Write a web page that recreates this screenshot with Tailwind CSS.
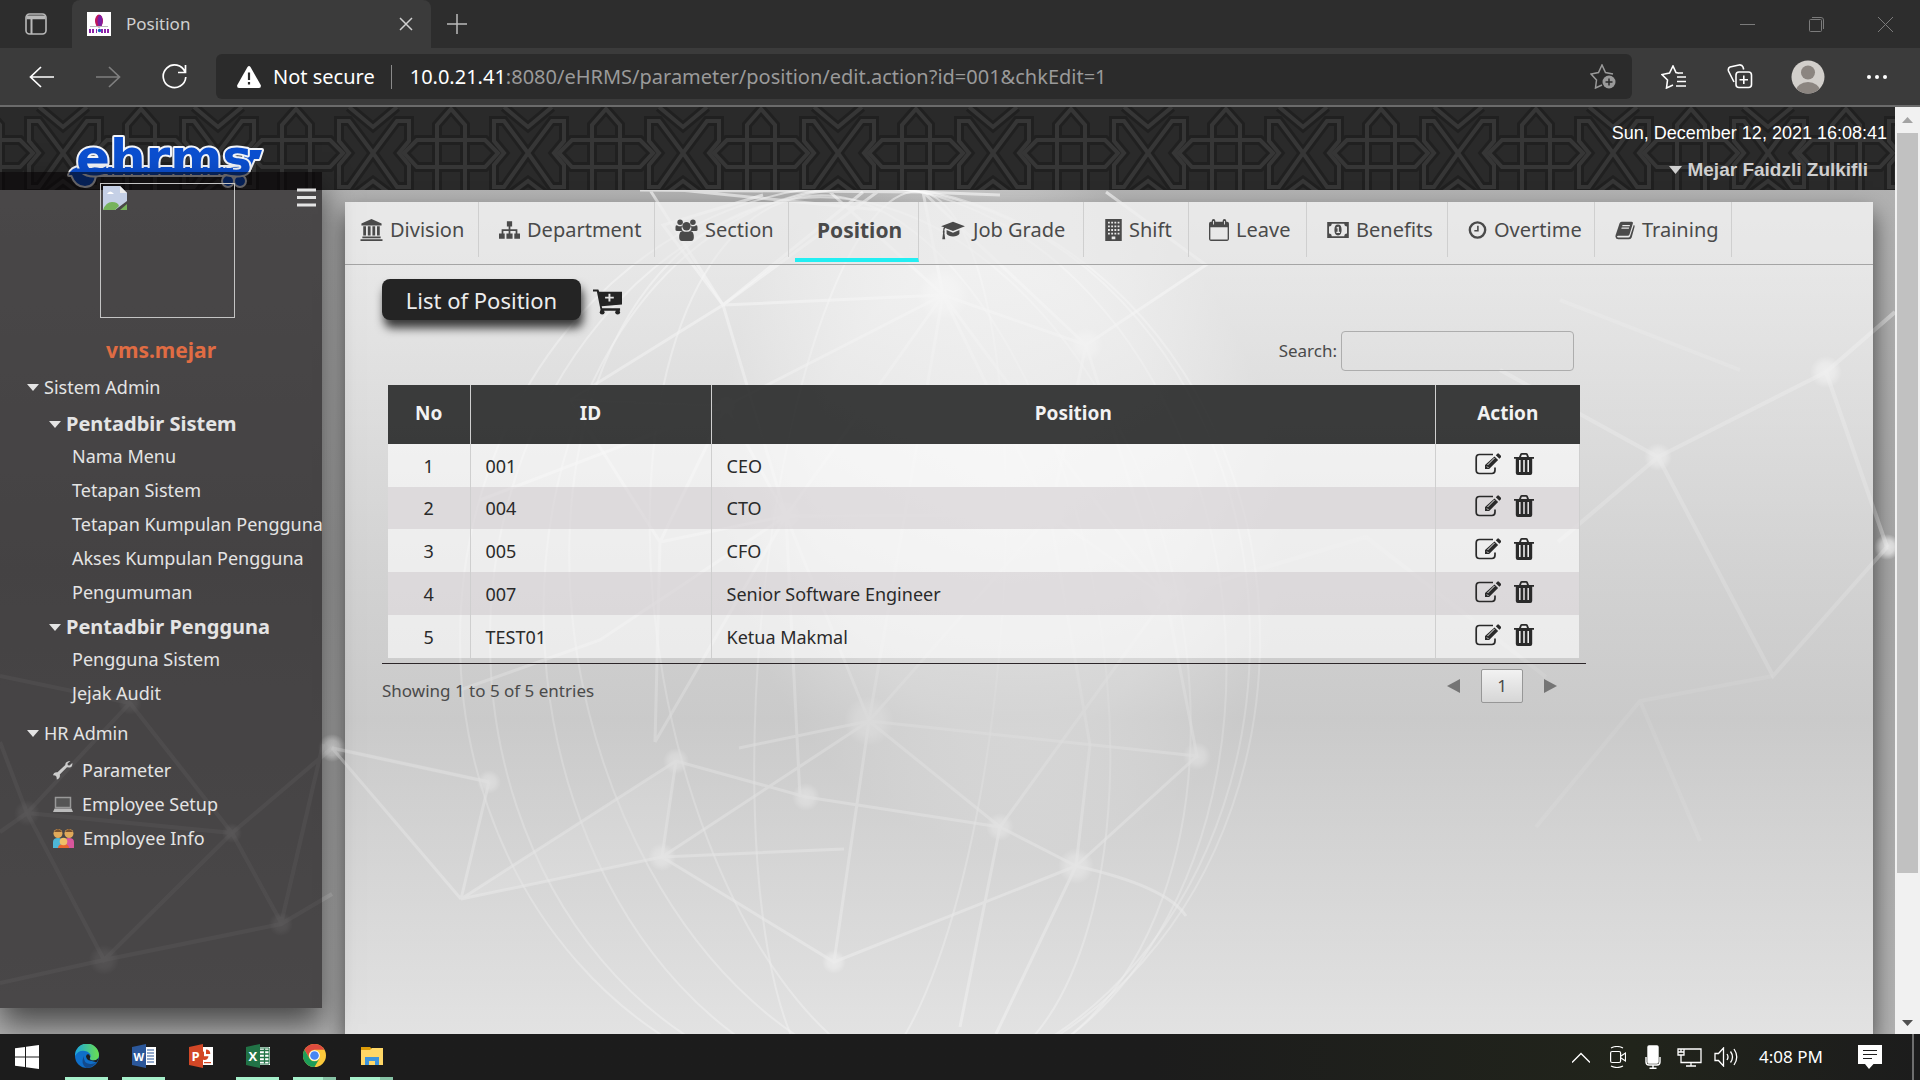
<!DOCTYPE html>
<html lang="en">
<head>
<meta charset="utf-8">
<title>Position</title>
<script src="https://cdn.jsdelivr.net/npm/@tailwindcss/browser@4"></script>
</head>
<body class="h-screen flex flex-col overflow-hidden bg-[#1d1d1d] font-['Noto_Sans',sans-serif]">

<!-- icon symbols -->
<svg class="hidden" aria-hidden="true">
  <symbol id="i-bank" viewBox="0 0 24 24"><path d="M12 0 1 5v2h22V5zM3 8h3v10H3zM8 8h3v10H8zM13 8h3v10h-3zM18 8h3v10h-3zM2 19h20v2H2zM0 22h24v2H0z" fill="currentColor"/></symbol>
  <symbol id="i-tree" viewBox="0 0 24 24"><path d="M9 2h6v6h-2v3h8v5h3v6h-6.500v-6H19v-3h-6v3h2.500v6h-7v-6H11v-3H5v3h1.500v6H0v-6h3v-5h8V8H9z" fill="currentColor"/></symbol>
  <symbol id="i-users" viewBox="0 0 24 24"><g fill="currentColor"><circle cx="5" cy="3.500" r="3"/><circle cx="19" cy="3.500" r="3"/><circle cx="12" cy="8" r="4.600"/><path d="M0 12V9q0-3 2-2 3 2 5 0-1 4 1 6H2q-2 0-2-1zM24 12V9q0-3-2-2-3 2-5 0 1 4-1 6h6q2 0 2-1zM4 20q0-7 4-7 4 2 8 0 4 0 4 7 0 4-3 4H7q-3 0-3-4z"/></g></symbol>
  <symbol id="i-cap" viewBox="0 0 26 24"><path d="m13 3 13 5-13 5-8.500-3.300Q3.500 11 3.600 13q1 1 0 2l.9 7H1.300l.9-7q-1-1 0-2 0-3 1-4L0 8zM20 12v4q-2 3-7 3t-7-3v-4l7 3z" fill="currentColor"/></symbol>
  <symbol id="i-building" viewBox="0 0 18 24"><path fill-rule="evenodd" d="M0 0h18v24H0zM3 3v2h2V3zm3.500 0v2h2V3zm3.500 0v2h2V3zm3.500 0v2h2V3zM3 7v2h2V7zm3.500 0v2h2V7zM10 7v2h2V7zm3.500 0v2h2V7zM3 11v2h2v-2zm3.500 0v2h2v-2zm3.500 0v2h2v-2zm3.500 0v2h2v-2zM3 15v2h2v-2zm3.500 0v2h2v-2zm3.500 0v2h2v-2zm3.500 0v2h2v-2zM7 19v3h4v-3z" fill="currentColor"/></symbol>
  <symbol id="i-cal" viewBox="0 0 22 24"><path fill-rule="evenodd" d="M3 3V2q0-2 2-2t2 2v1h8V2q0-2 2-2t2 2v1h1q2 0 2 2v17q0 2-2 2H2q-2 0-2-2V5q0-2 2-2zM1.500 9v13.500h19V9zM4.500 2v4h1V2zm12 0v4h1V2z" fill="currentColor"/></symbol>
  <symbol id="i-money" viewBox="0 0 24 20"><path fill-rule="evenodd" d="M0 1h24v18H0zM5 3q0 3-3 3v8q3 0 3 3h14q0-3 3-3V6q-3 0-3-3zM12 4q4 0 4 6t-4 6-4-6 4-6zM10.500 7v1.200l1-.2v4h-1.300v1.300h4V12H13V6.500h-1z" fill="currentColor"/></symbol>
  <symbol id="i-clock" viewBox="0 0 24 24"><circle cx="12" cy="12" r="9.700" fill="none" stroke="currentColor" stroke-width="3"/><path d="M12.500 6.500V13H8" fill="none" stroke="currentColor" stroke-width="2"/></symbol>
  <symbol id="i-book" viewBox="0 0 24 24"><path fill-rule="evenodd" d="M8 2h12q2 0 1.500 2l-4 13q-.5 2-2.500 2H4q-2 0-1.500 1T5 21h11q1.500 0 2-1.500L22.500 6q1.500.5 1 2L20 21q-.7 2-3 2H4q-3 0-3.500-3 0-2 1-4L5.500 4Q6 2 8 2zM9 6l-.4 1.500h9L18 6zM8 9l-.4 1.500h9L17 9z" fill="currentColor"/></symbol>
  <symbol id="i-cart" viewBox="0 0 30 26"><path fill-rule="evenodd" d="M0 0h5.500l1 2.500H30v13L9 17.500l.5 2H28V22H8L4 2.200H0zM16 4.500v3h-3.500v2H16v3h2v-3h3.500v-2H18v-3z" fill="currentColor"/><circle cx="9.500" cy="23.500" r="2.500" fill="currentColor"/><circle cx="25.500" cy="23.500" r="2.500" fill="currentColor"/></symbol>
  <symbol id="i-edit" viewBox="0 0 26 22"><path d="M18 1.500H4.500Q1.200 1.500 1.200 5v12q0 3.500 3.300 3.500H17q3 0 3-3.500v-2.500" fill="none" stroke="currentColor" stroke-width="1.700"/><path d="m19.500 3.500 3.600 3.600-9 9H10v-4zM20.800 2.200l1.500-1.500q.8-.8 1.600 0l2 2q.8.800 0 1.600l-1.500 1.500z" fill="currentColor"/><path d="m12 13.500 1.400 1.400M12.500 12l7-7" stroke="#eee" stroke-width="1" fill="none"/></symbol>
  <symbol id="i-trash" viewBox="0 0 20 22"><path fill-rule="evenodd" d="M0 4h5l1.200-3Q6.600 0 8 0h4q1.400 0 1.800 1L15 4h5v1.700h-1.800V20q0 2-2 2H3.800q-2 0-2-2V5.700H0zM7 4h6l-.8-2.200H7.800zM5 7v12h1.600V7zm4.200 0v12h1.600V7zm4.200 0v12H15V7z" fill="currentColor"/></symbol>
</svg>

<!-- tab strip -->
<div class="h-12 shrink-0 bg-[#2d2d2d] flex items-center text-[#d0d0d0]">
  <button class="w-[72px] h-12 flex items-center justify-center" aria-label="Tab actions"><svg width="22" height="22" viewBox="0 0 22 22" fill="none" stroke="#b8b8b8" stroke-width="1.600"><rect x="1" y="1" width="20" height="20" rx="3.500"/><path d="M1.500 3.500h19M1.500 5.300h19M6.500 6v15" stroke-width="2"/></svg></button>
  <div class="w-[359px] h-12 rounded-t-lg bg-[#3b3b3b] flex items-center pl-[15px] pr-[18px]">
    <svg width="24" height="24" viewBox="0 0 24 24"><path fill="#fff" d="M0 0h24v24H0z"/><ellipse cx="12" cy="9" rx="4" ry="6.500" fill="#c2185b"/><ellipse cx="13" cy="9" rx="2.500" ry="6" fill="#7b1fa2"/><path d="M3 14.500h18" stroke="#bbb"/><path d="M2 19h6m1 0h1m4 0h8" stroke="#8e24aa" stroke-width="4" stroke-dasharray="2 1"/><circle cx="12.500" cy="18.500" r="1.700" fill="#1565c0"/></svg>
    <span class="ml-[15px] text-[17px]">Position</span>
    <button class="ml-auto" aria-label="Close tab"><svg width="14" height="14" viewBox="0 0 14 14" stroke="#d0d0d0" stroke-width="1.500"><path d="m1 1 12 12M13 1 1 13"/></svg></button>
  </div>
  <button class="ml-4" aria-label="New tab"><svg width="20" height="20" viewBox="0 0 20 20" stroke="#bbb" stroke-width="1.500"><path d="M10 0v20M0 10h20"/></svg></button>
  <div class="ml-auto flex items-center gap-[54px] pr-[27px]">
    <button aria-label="Minimize"><svg width="15" height="15" viewBox="0 0 15 15" stroke="#7b7b7b"><path d="M0 7.500h15"/></svg></button>
    <button aria-label="Restore"><svg width="15" height="15" viewBox="0 0 15 15" stroke="#7b7b7b" fill="none"><rect x=".5" y="2.500" width="12" height="12" rx="1"/><path d="M3 .5h9q2.500 0 2.500 2.500v9"/></svg></button>
    <button aria-label="Close"><svg width="15" height="15" viewBox="0 0 15 15" stroke="#7b7b7b"><path d="m0 0 15 15M15 0 0 15"/></svg></button>
  </div>
</div>

<!-- address row -->
<div class="h-[59px] shrink-0 bg-[#3b3b3b] border-b-2 border-[#6b6b6b] flex items-center pl-[29px] pr-8">
  <button aria-label="Back"><svg width="25" height="22" viewBox="0 0 25 22" fill="none" stroke="#fff" stroke-width="1.700"><path d="M25 11H1.500M12 1 1.500 11 12 21"/></svg></button>
  <button class="ml-[42px]" aria-label="Forward"><svg width="25" height="22" viewBox="0 0 25 22" fill="none" stroke="#7f7f7f" stroke-width="1.700"><path d="M0 11h23.500M13 1l10.500 10L13 21"/></svg></button>
  <button class="ml-[41px]" aria-label="Reload"><svg width="25" height="25" viewBox="0 0 25 25" fill="none" stroke="#fff" stroke-width="1.700"><path d="M23 8A11.300 11.300 0 1 0 23.800 13M23.500 1v7.500H16"/></svg></button>
  <div class="ml-[29px] flex-1 min-w-0 h-[45px] rounded-md bg-[#2b2b2b] flex items-center pl-[21px] pr-4 text-xl">
    <svg class="shrink-0" width="24" height="22" viewBox="0 0 24 22"><path d="M10.500 1q1.500-2 3 0L24 19.500Q24 22 22 22H2q-2 0-2-2.500z" fill="#fff"/><path d="M12 6.500V14M12 16v2.500" stroke="#2b2b2b" stroke-width="2.200"/></svg>
    <span class="ml-3 text-white whitespace-nowrap">Not secure</span>
    <span class="ml-4 w-px h-6 bg-[#8a8a8a]"></span>
    <span class="ml-[18px] flex-1 text-[#9a9a9a] whitespace-nowrap"><span class="text-white">10.0.21.41</span>:8080/eHRMS/parameter/position/edit.action?id=001&amp;chkEdit=1</span>
    <button aria-label="Add to favorites"><svg width="26" height="25" viewBox="0 0 26 25" fill="none" stroke="#9a9a9a" stroke-width="1.500"><path d="M12 21 5.500 24l1-8L1 10l7.500-1.500L12 1l3.500 7.500L23 10"/><circle cx="19" cy="18" r="6.500" fill="#9a9a9a" stroke="none"/><path d="M19 14.500v7M15.500 18h7" stroke="#2b2b2b"/></svg></button>
  </div>
  <button class="ml-[29px]" aria-label="Favorites"><svg width="26" height="24" viewBox="0 0 26 24" fill="none" stroke="#fff" stroke-width="1.600"><path d="M12 20 5.500 23l1-8L1 9.500 8.500 8 12 1l3 6.500 3 .8M16 12h9M16 16.500h9M16 8h6M15 21h10"/></svg></button>
  <button class="ml-10" aria-label="Collections"><svg width="26" height="25" viewBox="0 0 26 25" fill="none" stroke="#fff" stroke-width="1.600"><path d="M7 18 1.500 7q-.8-3 1.500-4l9-2q3-.5 4 2l.7 2.500"/><rect x="9" y="8" width="15.500" height="15.500" rx="3"/><path d="M16.800 11.500v8.500M12.500 15.800H21"/></svg></button>
  <button class="ml-[38px]" aria-label="Profile"><svg width="34" height="34" viewBox="0 0 34 34"><clipPath id="av"><circle cx="17" cy="17" r="16.500"/></clipPath><g clip-path="url(#av)"><path fill="#d2cfcb" d="M0 0h34v34H0z"/><circle cx="17" cy="12.500" r="7" fill="#8b8580"/><ellipse cx="17" cy="31" rx="12" ry="9" fill="#8b8580"/></g></svg></button>
  <button class="ml-[41px]" aria-label="Settings and more"><svg width="22" height="6" viewBox="0 0 22 6" fill="#fff"><circle cx="3" cy="3" r="2"/><circle cx="11" cy="3" r="2"/><circle cx="19" cy="3" r="2"/></svg></button>
</div>

<!-- page viewport -->
<div class="flex-1 min-h-0 flex">
  <div class="relative flex-1 min-w-0 overflow-hidden flex flex-col bg-linear-to-b from-[#b4b4b4] via-[#a6a6a6] to-[#b2b2b2]">

    <!-- network globe backdrop -->
    <svg class="absolute inset-0 size-full" viewBox="0 107 1895 927" preserveAspectRatio="xMidYMin slice" fill="none" stroke="#fff" aria-hidden="true">
      <defs>
        <radialGradient id="glow"><stop offset="0" stop-color="#fff" stop-opacity=".95"/><stop offset=".65" stop-color="#fff" stop-opacity=".6"/><stop offset="1" stop-color="#fff" stop-opacity="0"/></radialGradient>
        <radialGradient id="node"><stop offset="0" stop-color="#fff" stop-opacity=".85"/><stop offset=".55" stop-color="#fff" stop-opacity=".6"/><stop offset="1" stop-color="#fff" stop-opacity="0"/></radialGradient>
      </defs>
      <ellipse cx="1000" cy="500" rx="280" ry="360" fill="url(#glow)" stroke="none" transform="rotate(-12 1000 500)"/>
      <g stroke-opacity=".55" stroke-width="2">
        <ellipse cx="860" cy="640" rx="400" ry="455"/><ellipse cx="870" cy="640" rx="380" ry="452"/>
        <ellipse cx="885" cy="640" rx="340" ry="455" transform="rotate(-6 885 640)"/><ellipse cx="880" cy="640" rx="300" ry="450" transform="rotate(-14 880 640)"/>
        <ellipse cx="880" cy="640" rx="220" ry="450" transform="rotate(-10 880 640)"/><ellipse cx="880" cy="640" rx="120" ry="450" transform="rotate(5 880 640)"/>
      </g>
      <g stroke-opacity=".6" stroke-width="3">
        <path d="M640 190 920 192 1000 195M650 190l73 115M680 190l200 20M920 192l-40-2-157 115-153 95M943 295 723 305M943 295l143 50M943 295 726 406M943 295 786 516M943 295l107 220M943 295l223 302M943 295 830 192M943 295l-20-103M943 295 869 721M1086 345l-36 170M1086 345l80 252M1086 345 923 192M1086 345l120-80-100-73"/>
        <path d="m723 305 63 211M726 406l60 110 264-1 116 82M786 516l-126 26-90-142M660 542l66-136M660 542l-5 200M786 516l83 205M786 516 655 742M1050 515 869 721l131 106 76 39M869 721l-130 27M869 721l328 35-31-159M869 721l-207 136M869 721l-35 241M786 516l14 281M806 797l194 30M806 797l-130-36M1076 866l121-110M1076 866l-242 96-98-60-74-45M1076 866q90 20 110 50M1000 827l-40 200M1076 866l-80 168M676 761 461 899l201-42 14-96M662 857l182-8M461 899l-129-151M489 782l-28 117M489 782l-157-34"/>
        <path d="m723 305-60-80 100-30M723 305l140-113M570 400l156 6M786 516 600 640l-140 50M1050 515l40 230-14 121M1166 597 1000 827M480 500l246-94"/>
      </g>
      <path fill="#fff" fill-opacity=".25" stroke="none" d="M676 761 461 899l201-42z"/>
      <g stroke-opacity=".4" stroke-width="4">
        <path d="m1500 370 158 87 168-85 69-60M1658 457l115 219 114-129M1658 457l-100 85M1826 372l61 175" />
        <path stroke-opacity=".22" d="m1560 300 180 70M1773 676l-133 25-104 126M1640 701l60 140M1166 597l200-60 180 140"/>
        <path stroke-opacity=".22" d="m0 676 130 27 102 130-128 127-77-147L0 742M27 813l205 20 50 91M27 813l103-110M27 813 0 832M104 960l177-36 51-30M104 960 0 983M232 833l100-85M281 924l42-180M332 748l157 34"/>
      </g>
      <g fill="url(#node)" stroke="none">
        <circle cx="943" cy="295" r="26"/><circle cx="1086" cy="345" r="17"/><circle cx="726" cy="406" r="15"/><circle cx="786" cy="516" r="16"/><circle cx="1050" cy="515" r="15"/><circle cx="869" cy="721" r="25"/><circle cx="806" cy="797" r="14"/><circle cx="1000" cy="827" r="14"/><circle cx="1076" cy="866" r="18"/><circle cx="676" cy="761" r="13"/><circle cx="662" cy="857" r="14"/><circle cx="1166" cy="597" r="26"/><circle cx="1197" cy="756" r="14"/><circle cx="1826" cy="372" r="16"/><circle cx="1658" cy="457" r="14"/><circle cx="1887" cy="547" r="13"/><circle cx="489" cy="782" r="12"/><circle cx="332" cy="748" r="14"/><circle cx="834" cy="962" r="12"/>
      </g>
      <g fill="url(#node)" fill-opacity=".45" stroke="none">
        <circle cx="130" cy="703" r="12"/><circle cx="27" cy="813" r="13"/><circle cx="232" cy="833" r="10"/><circle cx="104" cy="960" r="15"/><circle cx="281" cy="924" r="12"/>
      </g>
    </svg>

    <!-- banner -->
    <header class="relative h-[83px] shrink-0 flex justify-between">
      <svg class="absolute inset-0 size-full" aria-hidden="true">
        <defs>
          <pattern id="tile" width="155" height="92" patternUnits="userSpaceOnUse" x="-14" y="0">
            <path fill="#2a2a2a" d="M0 0h155v92H0z"/>
            <g fill="none" stroke="#202020" stroke-width="10">
              <path d="M108 46 121 33h68l13 13-13 14h-68zM-47 46-34 33H34L47 46 34 60h-68zM-14 90V18L0 2l14 16v72M141 90V18l14-16 14 16v72"/>
              <path d="m77 46-24-32H43v20l10 12-10 12v22h10zM77 46l24-32h12v20l-10 12 10 12v22h-12zM53 0l24 20L101 0M53 92l24-18 24 18"/>
            </g>
            <g fill="none" stroke="#363636" stroke-width="4">
              <path d="M108 46 121 33h68l13 13-13 14h-68zM-47 46-34 33H34L47 46 34 60h-68zM-14 90V18L0 2l14 16v72M141 90V18l14-16 14 16v72"/>
              <path d="m77 46-24-32H43v20l10 12-10 12v22h10zM77 46l24-32h12v20l-10 12 10 12v22h-12zM53 0l24 20L101 0M53 92l24-18 24 18"/>
            </g>
          </pattern>
        </defs>
        <rect width="100%" height="100%" fill="url(#tile)"/>
      </svg>
      <svg class="relative ml-[66px] mt-[20px]" width="202" height="64" viewBox="66 127 202 64" role="img" aria-label="ehrms">
        <g fill="#0b4fd0" stroke="#f4f6fa" stroke-width="4" paint-order="stroke" stroke-linejoin="round">
          <path d="M69 175q2-8 12-8h152q9 0 10-6l3-11h16l-3 9h-5l-4 9q-3 7-12 7H95q-1 11-10 11t-13-11z"/>
          <circle cx="228" cy="181" r="5"/><circle cx="240" cy="181" r="5"/>
          <text x="76" y="175" font-family="DejaVu Sans" font-weight="700" font-size="50">ehrms</text>
          <path stroke="none" d="M71 174q2-6 12-6h150v6z"/>
        </g>
      </svg>
      <div class="relative flex flex-col items-end pt-[14px] pr-2 font-['Liberation_Sans',sans-serif] text-[18px] leading-6">
        <span class="text-white">Sun, December 12, 2021 16:08:41</span>
        <a href="#" class="mt-[13px] mr-[19px] flex items-center gap-[5px] text-[19px] font-bold text-[#cfcfcf]"><svg width="13" height="8" viewBox="0 0 13 8" fill="#cfcfcf"><path d="M0 0h13L6.500 8z"/></svg>Mejar Faidzli Zulkifli</a>
      </div>
    </header>

    <div class="relative flex-1 min-h-0 flex">
      <!-- side menu -->
      <nav class="relative w-[322px] shrink-0 -mt-[18px] mb-[26px] bg-[#030001]/60 shadow-[0_16px_30px_rgba(0,0,0,0.6)] text-[#e4e4e4] text-lg whitespace-nowrap">
        <div class="flex justify-between pl-[100px] pr-[6px] pt-[11px]">
          <div class="size-[135px] border border-[#c4c4c4] p-[2px]"><svg width="24" height="24" viewBox="0 0 24 24"><path d="M0 0h17l7 7v8L12 24H0z" fill="#c5d0e6"/><path d="M0 24q3-8 9-8t7 4l-4 4z" fill="#76b35c"/><path d="M17 0v7h7z" fill="#eee"/><path d="M4 8q3-5 7 0z" fill="#fff"/><path d="m17 24 7-6v6z" fill="#76b35c"/></svg></div>
          <button class="self-start mt-[5px]" aria-label="Toggle menu"><svg width="19" height="20" viewBox="0 0 19 20" stroke="#e4e4e4" stroke-width="3"><path d="M0 2h19M0 9.500h19M0 17h19"/></svg></button>
        </div>
        <div class="mt-[14px] h-9 leading-9 text-center font-bold text-[21px] text-[#e06c43]">vms.mejar</div>
        <ul class="mt-px">
          <li><a href="#" class="h-9 flex items-center gap-[5px] pl-[27px]"><svg width="12" height="7" viewBox="0 0 12 7" fill="currentColor"><path d="M0 0h12L6 7z"/></svg>Sistem Admin</a>
            <ul>
              <li><a href="#" class="h-9 mt-px flex items-center gap-[5px] pl-[49px] text-xl font-bold"><svg width="12" height="7" viewBox="0 0 12 7" fill="currentColor"><path d="M0 0h12L6 7z"/></svg>Pentadbir Sistem</a>
                <ul class="-mt-[3px] pl-[72px] leading-[34px]">
                  <li><a href="#">Nama Menu</a></li><li><a href="#">Tetapan Sistem</a></li><li><a href="#">Tetapan Kumpulan Pengguna</a></li><li><a href="#">Akses Kumpulan Pengguna</a></li><li><a href="#">Pengumuman</a></li>
                </ul>
              </li>
              <li><a href="#" class="h-9 flex items-center gap-[5px] pl-[49px] text-xl font-bold"><svg width="12" height="7" viewBox="0 0 12 7" fill="currentColor"><path d="M0 0h12L6 7z"/></svg>Pentadbir Pengguna</a>
                <ul class="-mt-[3px] pl-[72px] leading-[34px]">
                  <li><a href="#">Pengguna Sistem</a></li><li><a href="#">Jejak Audit</a></li>
                </ul>
              </li>
            </ul>
          </li>
          <li class="mt-[5px]"><a href="#" class="h-9 flex items-center gap-[5px] pl-[27px]"><svg width="12" height="7" viewBox="0 0 12 7" fill="currentColor"><path d="M0 0h12L6 7z"/></svg>HR Admin</a>
            <ul class="mt-[2px] pl-[53px] leading-[34px]">
              <li><a href="#" class="flex items-center gap-[9px]"><svg width="20" height="20" viewBox="0 0 20 20"><path d="M17.500 1 14.500 3.500l.3 1.700 1.700.3L19.300 3q.5 4-2.800 4.500L14 7.300 6.800 14.500q.8 3.500-3 5l-.3-2.700-1.300-1.300L0 15.300q.8-3.500 4.500-3L12.300 5Q12 1.500 17.500 1z" fill="#ccc"/></svg>Parameter</a></li>
              <li><a href="#" class="flex items-center gap-[9px]"><svg width="20" height="16" viewBox="0 0 20 16"><path d="M2.500 1.500h15v10h-15z" fill="#555" stroke="#999" stroke-width="1.500"/><path d="M1.500 12.500h17L20 16H0z" fill="#bbb"/></svg>Employee Setup</a></li>
              <li><a href="#" class="flex items-center gap-[9px]"><svg width="21" height="20" viewBox="0 0 21 20"><path d="M0 20v-6q0-4 5-4t5 4v6z" fill="#4db6d6"/><path d="M11 20v-6q0-4 5-4t5 4v6z" fill="#d8569c"/><circle cx="5" cy="5.500" r="4.500" fill="#e0a95a"/><circle cx="16" cy="5.500" r="4.500" fill="#e0a95a"/><path d="M1 4q4-6 8 0zM12 4q4-6 8 0z" fill="#7a5230"/><path d="M5 20q0-4 5.500-4T16 20z" fill="#e8662e"/><circle cx="10.500" cy="13.500" r="3.800" fill="#f0bf68"/></svg>Employee Info</a></li>
            </ul>
          </li>
        </ul>
      </nav>

      <!-- content panel -->
      <main class="flex-1 min-w-0 ml-[23px] mt-3 mr-[22px] bg-linear-to-b from-[#fafafa]/80 via-[#d2d2d2]/80 via-62% to-[#eeeeee]/80 shadow-[0_12px_22px_rgba(0,0,0,0.6)] text-[#4a4a4a]">
        <nav class="h-[63px] flex border-b border-[#a5a5a5] bg-[#e6e6e6]/50 text-xl leading-[56px] whitespace-nowrap">
          <a href="#" class="w-[134px] h-[55px] flex items-center gap-[7px] pl-[15px] border-r border-[#cfcfcf]"><svg width="23" height="22"><use href="#i-bank"/></svg>Division</a>
          <a href="#" class="w-[176px] h-[55px] flex items-center gap-[7px] pl-[20px] border-r border-[#cfcfcf]"><svg width="21" height="22"><use href="#i-tree"/></svg>Department</a>
          <a href="#" class="w-[134px] h-[55px] flex items-center gap-[7px] pl-[20px] border-r border-[#cfcfcf]"><svg width="23" height="22"><use href="#i-users"/></svg>Section</a>
          <a href="#" class="w-[124px] ml-[6px] h-[60px] border-b-4 border-b-[#22eef2] border-r border-r-[#cfcfcf] pl-[22px] text-[21px] font-bold">Position</a>
          <a href="#" class="w-[165px] h-[55px] flex items-center gap-[7px] pl-[21px] border-r border-[#cfcfcf]"><svg width="26" height="22"><use href="#i-cap"/></svg>Job Grade</a>
          <a href="#" class="w-[105px] h-[55px] flex items-center gap-[7px] pl-[21px] border-r border-[#cfcfcf]"><svg width="17" height="22"><use href="#i-building"/></svg>Shift</a>
          <a href="#" class="w-[118px] h-[55px] flex items-center gap-[7px] pl-[20px] border-r border-[#cfcfcf]"><svg width="20" height="22"><use href="#i-cal"/></svg>Leave</a>
          <a href="#" class="w-[141px] h-[55px] flex items-center gap-[7px] pl-[20px] border-r border-[#cfcfcf]"><svg width="22" height="18"><use href="#i-money"/></svg>Benefits</a>
          <a href="#" class="w-[147px] h-[55px] flex items-center gap-[7px] pl-[20px] border-r border-[#cfcfcf]"><svg width="19" height="20"><use href="#i-clock"/></svg>Overtime</a>
          <a href="#" class="w-[137px] h-[55px] flex items-center gap-[7px] pl-[20px] border-r border-[#cfcfcf]"><svg width="20" height="20"><use href="#i-book"/></svg>Training</a>
        </nav>

        <div class="ml-[37px] mr-[287px] pt-[14px]">
          <div class="flex items-center">
            <h1 class="w-[199px] h-[41px] leading-[42px] text-center rounded-lg bg-[#242424] text-[#ededed] text-[22px] shadow-[2px_8px_10px_rgba(0,0,0,0.75)]">List of Position</h1>
            <button class="ml-3 mt-1 text-[#242424]" aria-label="Add position"><svg width="29" height="26"><use href="#i-cart"/></svg></button>
          </div>
          <div class="mt-[11px] mr-3 flex items-center justify-end gap-1">
            <label for="search" class="text-[17px]">Search:</label>
            <input id="search" type="search" class="w-[233px] h-10 px-2 rounded border border-[#adadad] bg-transparent">
          </div>
          <div class="mt-[14px] pl-[6px] pr-[6px] pb-[5px] border-b border-[#2c2629]">
            <table class="w-full table-fixed border-collapse text-lg leading-6 text-[#2a2a2a]">
              <colgroup><col class="w-[82px]"><col class="w-[241px]"><col><col class="w-[144px]"></colgroup>
              <thead>
                <tr class="h-[59px] bg-[#2b2d2c]/92 text-[#f2f2f2] text-[19px]">
                  <th class="pb-[3px] border-r border-[#cfcfcf]">No</th><th class="pb-[3px] border-r border-[#cfcfcf]">ID</th><th class="pb-[3px] border-r border-[#cfcfcf]">Position</th><th class="pb-[3px]">Action</th>
                </tr>
              </thead>
              <tbody>
                <tr class="h-[43px] bg-white/60"><td class="text-center border-r border-[#cfcfcf]">1</td><td class="pl-[15px] border-r border-[#cfcfcf]">001</td><td class="pl-[15px] border-r border-[#cfcfcf]">CEO</td><td class="pl-[39px] border-r border-[#cfcfcf]"><div class="flex gap-[13px] pb-1"><button aria-label="Edit"><svg width="26" height="22"><use href="#i-edit"/></svg></button><button aria-label="Delete"><svg width="20" height="22"><use href="#i-trash"/></svg></button></div></td></tr>
                <tr class="h-[42px] bg-[#dfdbdd]/75"><td class="text-center border-r border-[#cfcfcf]">2</td><td class="pl-[15px] border-r border-[#cfcfcf]">004</td><td class="pl-[15px] border-r border-[#cfcfcf]">CTO</td><td class="pl-[39px] border-r border-[#cfcfcf]"><div class="flex gap-[13px] pb-1"><button aria-label="Edit"><svg width="26" height="22"><use href="#i-edit"/></svg></button><button aria-label="Delete"><svg width="20" height="22"><use href="#i-trash"/></svg></button></div></td></tr>
                <tr class="h-[43px] bg-white/60"><td class="text-center border-r border-[#cfcfcf]">3</td><td class="pl-[15px] border-r border-[#cfcfcf]">005</td><td class="pl-[15px] border-r border-[#cfcfcf]">CFO</td><td class="pl-[39px] border-r border-[#cfcfcf]"><div class="flex gap-[13px] pb-1"><button aria-label="Edit"><svg width="26" height="22"><use href="#i-edit"/></svg></button><button aria-label="Delete"><svg width="20" height="22"><use href="#i-trash"/></svg></button></div></td></tr>
                <tr class="h-[43px] bg-[#dfdbdd]/75"><td class="text-center border-r border-[#cfcfcf]">4</td><td class="pl-[15px] border-r border-[#cfcfcf]">007</td><td class="pl-[15px] border-r border-[#cfcfcf]">Senior Software Engineer</td><td class="pl-[39px] border-r border-[#cfcfcf]"><div class="flex gap-[13px] pb-1"><button aria-label="Edit"><svg width="26" height="22"><use href="#i-edit"/></svg></button><button aria-label="Delete"><svg width="20" height="22"><use href="#i-trash"/></svg></button></div></td></tr>
                <tr class="h-[43px] bg-white/60"><td class="text-center border-r border-[#cfcfcf]">5</td><td class="pl-[15px] border-r border-[#cfcfcf]">TEST01</td><td class="pl-[15px] border-r border-[#cfcfcf]">Ketua Makmal</td><td class="pl-[39px] border-r border-[#cfcfcf]"><div class="flex gap-[13px] pb-1"><button aria-label="Edit"><svg width="26" height="22"><use href="#i-edit"/></svg></button><button aria-label="Delete"><svg width="20" height="22"><use href="#i-trash"/></svg></button></div></td></tr>
              </tbody>
            </table>
          </div>
          <div class="pt-[5px] pr-[29px] flex justify-between items-start text-[17px]">
            <span class="pt-[10px] leading-6">Showing 1 to 5 of 5 entries</span>
            <div class="flex items-center gap-[21px]">
              <button aria-label="Previous"><svg width="13" height="14" viewBox="0 0 13 14" fill="#757575"><path d="M13 0v14L0 7z"/></svg></button>
              <button class="w-[42px] h-[34px] rounded-xs border border-[#979797] bg-linear-to-b from-[#f2f2f2] to-[#d6d6d6]">1</button>
              <button aria-label="Next"><svg width="13" height="14" viewBox="0 0 13 14" fill="#757575"><path d="M0 0v14l13-7z"/></svg></button>
            </div>
          </div>
        </div>
      </main>
    </div>
  </div>

  <!-- scrollbar -->
  <div class="w-[25px] shrink-0 bg-[#f1f1f1] flex flex-col items-center">
    <svg class="my-[10px] shrink-0" width="11" height="6" viewBox="0 0 11 6" fill="#a3a3a3"><path d="M0 6h11L5.500 0z"/></svg>
    <div class="w-[21px] grow-[742] bg-[#c1c1c1]"></div>
    <div class="grow-[148]"></div>
    <svg class="mb-2 shrink-0" width="11" height="6" viewBox="0 0 11 6" fill="#505050"><path d="M0 0h11L5.500 6z"/></svg>
  </div>
</div>

<!-- taskbar -->
<footer class="h-[46px] shrink-0 bg-[#1d1d1d] bg-linear-to-r from-[#1c1c1c] from-60% via-[#21241b] via-85% to-[#1c1c1c] flex items-stretch">
  <button class="w-[58px] pl-[15px]" aria-label="Start"><svg width="24" height="24" viewBox="0 0 24 24" fill="#fff"><path d="M0 3.300 10 2v9.500H0zM11 1.800 24 0v11.500H11zM0 12.500h10V22L0 20.700zM11 12.500h13V24l-13-1.800z"/></svg></button>
  <button class="w-[57px] flex flex-col items-center" aria-label="Edge"><svg class="my-auto" width="24" height="24" viewBox="0 0 24 24"><defs><linearGradient id="eg" x1="0" x2="1"><stop offset="0" stop-color="#1ba5e0"/><stop offset="1" stop-color="#6be04c"/></linearGradient></defs><circle cx="12" cy="12" r="12" fill="#0f6fc9"/><path d="M0 12A12 12 0 0 1 24 11q0 5-5.500 5.500-4-.5-3.500-2.500 2-4-3-6.500Q4 5 0 12z" fill="url(#eg)"/><path d="M9 12q-1 7 6 8 4 .5 7-2.500-4 6.500-10.500 6.500Q5 20 9 12z" fill="#124a8c"/><path d="M15 16.500q-3 0-4-4 .5-3 3-2 2 2 1 3.500-1 1.500 2 2.500 4 .5 6.500-2.500-1 5-3 4z" fill="#1d1d1d"/></svg><span class="w-[43px] h-[3px] bg-[#a6f0cb]"></span></button>
  <button class="w-[57px] flex flex-col items-center" aria-label="Word"><svg class="my-auto" width="24" height="24" viewBox="0 0 24 24"><path d="M14 3h10v18H14z" fill="#fff"/><path d="M15 6h7M15 9h7M15 12h7M15 15h7M15 18h7" stroke="#2b579a" stroke-width="1.200"/><path d="M0 3 14 0v24L0 21z" fill="#2b579a"/><text x="1.500" y="16.500" font-family="Open Sans" font-weight="700" font-size="11" fill="#fff">W</text></svg><span class="w-[43px] h-[3px] bg-[#a6f0cb]"></span></button>
  <button class="w-[57px] flex flex-col items-center" aria-label="PowerPoint"><svg class="my-auto" width="24" height="24" viewBox="0 0 24 24"><path d="M14 3h10v18H14z" fill="#fff"/><path d="M15 7.500a4.200 4.200 0 1 0 4.500 4.700H15zM17 5.500V10h4.300A4.500 4.500 0 0 0 17 5.500zM15 18h7v1.300h-7z" fill="#d24726"/><path d="M0 3 14 0v24L0 21z" fill="#d24726"/><text x="2.500" y="17" font-family="Open Sans" font-weight="700" font-size="13" fill="#fff">P</text></svg><span class="w-[43px] h-[3px]"></span></button>
  <button class="w-[57px] flex flex-col items-center" aria-label="Excel"><svg class="my-auto" width="24" height="24" viewBox="0 0 24 24"><path d="M14 3h10v18H14z" fill="#fff"/><path d="M14 6.500h9M14 10h9M14 13.500h9M14 17h9M18.500 4.500v15" stroke="#217346" stroke-width="1.300"/><path d="M14 4h9v16h-9" fill="none" stroke="#217346"/><path d="M0 3 14 0v24L0 21z" fill="#217346"/><text x="2.500" y="17" font-family="Open Sans" font-weight="700" font-size="13" fill="#fff">X</text></svg><span class="w-[43px] h-[3px] bg-[#a6f0cb]"></span></button>
  <button class="w-[57px] flex flex-col items-center" aria-label="Chrome"><svg class="my-auto" width="23" height="23" viewBox="0 0 24 24"><circle cx="12" cy="12" r="12" fill="#fbc93b"/><path d="M1.600 6A12 12 0 0 1 22.400 6H12a6 6 0 0 0-5.200 9z" fill="#dd4b3e"/><path d="M1.600 6A12 12 0 0 0 12 24l5.200-9A6 6 0 0 1 6.800 15z" fill="#1d9d58"/><circle cx="12" cy="12" r="5.600" fill="#fff"/><circle cx="12" cy="12" r="4.500" fill="#4587f3"/></svg><span class="w-[43px] h-[3px] bg-[#a6f0cb] border-r-[13px] border-[#86c3a5]"></span></button>
  <button class="w-[57px] flex flex-col items-center" aria-label="File Explorer"><svg class="my-auto" width="22" height="20" viewBox="0 0 22 20"><path d="M0 1h9l2 2v3H0z" fill="#dd9c08"/><path d="M0 4h9l2-2h11v17H0z" fill="#ffd766"/><path d="M4 19v-8h14v8h-4v-4H8v4z" fill="#3d94dc"/></svg><span class="w-[43px] h-[3px] bg-[#a6f0cb] border-r-[13px] border-[#86c3a5]"></span></button>

  <div class="ml-auto flex items-center text-white">
    <button aria-label="Show hidden icons"><svg width="18" height="11" viewBox="0 0 18 11" fill="none" stroke="#fff" stroke-width="1.400"><path d="M0 10.500 9 1.500l9 9"/></svg></button>
    <svg class="ml-5" width="16" height="22" viewBox="0 0 16 22" fill="none" stroke="#fff" stroke-width="1.200"><rect x=".6" y="5.500" width="10" height="11" rx="1.500"/><path d="m11 10 4.500-3v8L11 12M1 2q6-3 12 0M1 20q6 3 12 0"/></svg>
    <svg class="ml-[19px]" width="16" height="24" viewBox="0 0 16 24" fill="none" stroke="#fff" stroke-width="1.400"><rect x="3" y="1" width="10" height="17" rx="1" fill="#fff"/><path d="M1 12v5q0 3 3 3h8q3 0 3-3v-5M8 20v3.500M4.500 23.300h7"/></svg>
    <svg class="ml-4" width="25" height="20" viewBox="0 0 25 20" fill="none" stroke="#fff" stroke-width="1.300"><path d="M7 2h17v13.500H4V8M14 15.500V19M9 19h10M1 2h6v6H1zM4 2v3M1 5h6"/></svg>
    <svg class="ml-3" width="24" height="20" viewBox="0 0 24 20" fill="none" stroke="#fff" stroke-width="1.300"><path d="M1 6.500h3.500L9.500 1v18l-5-5.500H1zM13 7q2 3 0 6M16.500 4.500q4 5.500 0 11M20 2q5.500 8 0 16"/></svg>
    <span class="ml-[21px] w-[65px] text-[17px] whitespace-nowrap">4:08 PM</span>
    <button class="ml-[34px] mr-[30px]" aria-label="Notifications"><svg width="24" height="24" viewBox="0 0 24 24"><path d="M0 0h24v19h-8.500L11 24l-4-5H0z" fill="#fff"/><path d="M5 5.500h14M5 9.500h14M5 13.500h9" stroke="#1d1d1d" stroke-width="1.200"/></svg></button>
    <span class="w-2 h-full border-l-2 border-[#6e6e6e]"></span>
  </div>
</footer>
</body>
</html>
